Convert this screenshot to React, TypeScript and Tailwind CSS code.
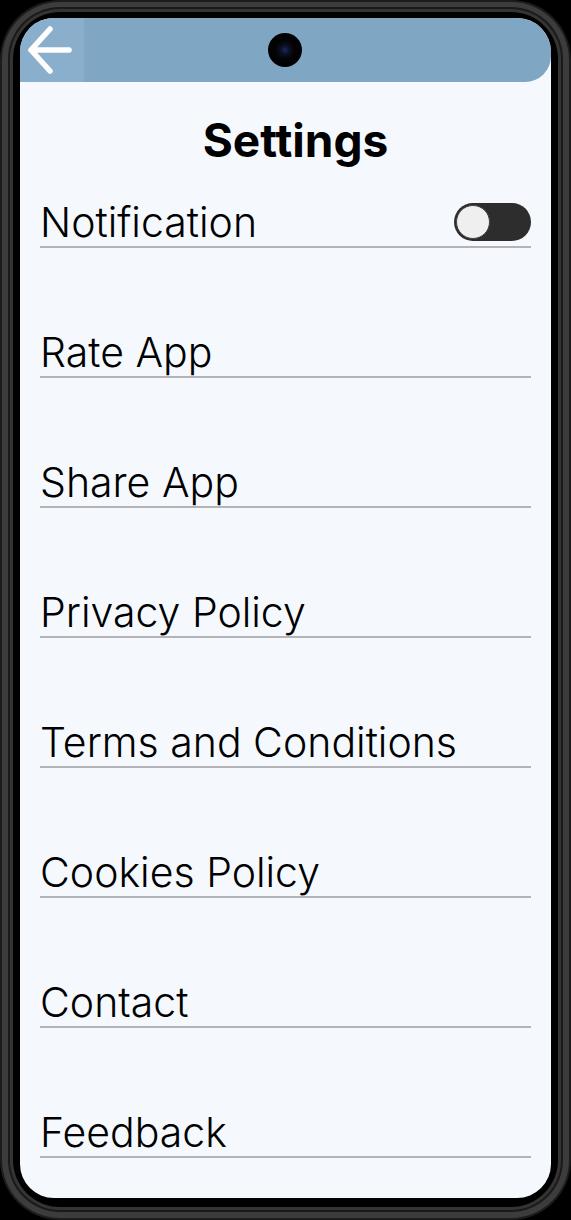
import { useState } from 'react';

const items = [
  'Rate App',
  'Share App',
  'Privacy Policy',
  'Terms and Conditions',
  'Cookies Policy',
  'Contact',
  'Feedback',
];

function BackArrow() {
  return (
    <svg width="64" height="64" viewBox="0 0 64 64" fill="none">
      <path
        d="M11 32H49M11 32L30 11M11 32L30 53"
        stroke="white"
        strokeWidth="5.5"
        strokeLinecap="round"
        strokeLinejoin="round"
      />
    </svg>
  );
}

function Toggle() {
  const [on, setOn] = useState(false);
  return (
    <button
      onClick={() => setOn(!on)}
      className="flex h-[38px] w-[77px] items-center rounded-full bg-[#2d2d2d] px-[2px]"
    >
      <span
        className={`h-[34px] w-[34px] rounded-full border border-[#444] bg-[#efefef] transition-transform ${on ? 'translate-x-[39px]' : ''}`}
      />
    </button>
  );
}

export default function App() {
  return (
    <div className="h-[1220px] w-[571px] bg-black" style={{ fontFamily: 'Inter, "Noto Sans", sans-serif' }}>
      <div className="h-full rounded-[60px] bg-[#1c1c1c] p-[2px]">
        <div className="h-full rounded-[58px] bg-[#3c3c3c] px-[6px] pt-[5px] pb-[6px]">
          <div className="h-full rounded-[52px] bg-[#1a1a1a] p-[2px]">
            <div className="h-full rounded-[50px] bg-[#343434] p-[3px]">
              <div className="h-full rounded-[47px] bg-black px-[7px] pt-[6px] pb-[9px]">
                <div className="relative flex h-full flex-col overflow-hidden rounded-[34px] bg-[#f5f9fe]">
                  <header className="flex h-[64px] shrink-0 rounded-b-[26px] bg-[#7fa6c3]">
                    <button className="flex h-full w-[64px] items-center justify-center bg-[#89afcc]">
                      <BackArrow />
                    </button>
                  </header>
                  <span className="absolute left-[248px] top-[15px] h-[34px] w-[34px] rounded-full bg-[radial-gradient(circle,#1f2a5c_0%,#0c1024_18%,#030305_40%,#000_100%)]" />

                  <h1 className="h-[116px] pl-[20px] pt-[28px] text-center text-[46px] font-bold leading-[60px] text-black">
                    Settings
                  </h1>

                  <div className="flex flex-col gap-[80px] px-[20px]">
                    <div className="flex h-[50px] items-center justify-between border-b-2 border-[#b4b4b8]">
                      <span className="text-[41px] font-light leading-[48px] text-black">Notification</span>
                      <Toggle />
                    </div>
                    {items.map((item) => (
                      <div key={item} className="flex h-[50px] items-center border-b-2 border-[#b4b4b8]">
                        <span className="text-[41px] font-light leading-[48px] text-black">{item}</span>
                      </div>
                    ))}
                  </div>
                </div>
              </div>
            </div>
          </div>
        </div>
      </div>
    </div>
  );
}
